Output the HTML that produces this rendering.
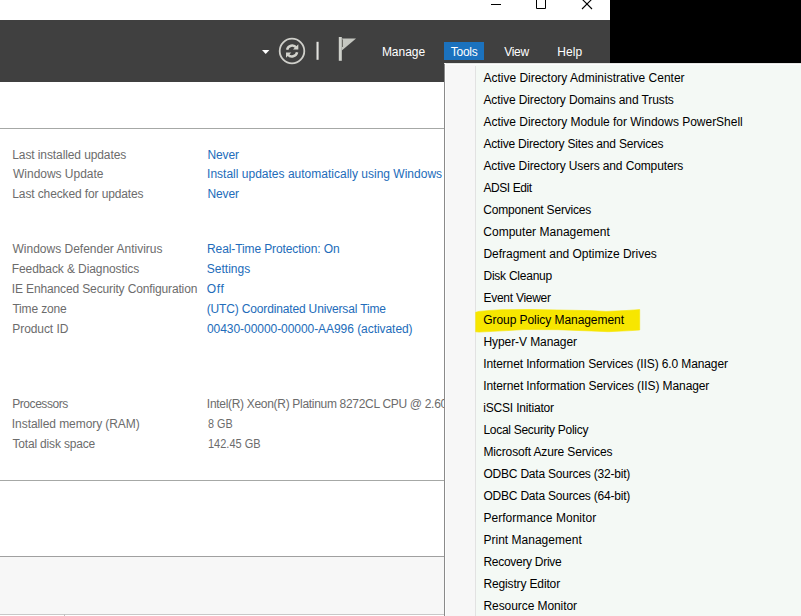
<!DOCTYPE html>
<html><head><meta charset="utf-8"><title>Server Manager</title>
<style>
html,body{margin:0;padding:0;}
body{width:801px;height:616px;overflow:hidden;background:#fff;position:relative;font-family:"Liberation Sans",sans-serif;font-size:12px;}
.abs{position:absolute;}
.t{position:absolute;white-space:nowrap;line-height:14px;height:14px;}
.k{color:#6c6c6c;}
.l{color:#226cba;}
.g{color:#6c6c6c;}
.m{color:#000;}
.h{color:#fff;}
</style></head><body>
<div class="abs" style="left:0;top:0;width:610px;height:616px;background:#fff;overflow:hidden;">
<div class="abs" style="left:0;top:20px;width:610px;height:62px;background:#404040;"></div>
<div class="abs" style="left:0;top:128px;width:610px;height:1px;background:#a6a8a6;"></div>
<div class="abs" style="left:0;top:480px;width:610px;height:1px;background:#a6a8a6;"></div>
<div class="abs" style="left:0;top:556px;width:610px;height:59px;background:#f7f7f7;"></div>
<div class="abs" style="left:0;top:556px;width:610px;height:1px;background:#a0a0a0;"></div>
<div class="abs" style="left:0;top:614px;width:610px;height:1px;background:#c8c8c8;"></div>
<div class="abs" style="left:64px;top:614px;width:1px;height:2px;background:#c0c0c0;"></div>
<svg class="abs" style="left:480px;top:0" width="130" height="20" viewBox="0 0 130 20">
<path d="M11 4.5H21" stroke="#000" stroke-width="1" fill="none"/>
<path d="M56.5 -1V8.5H65.5V-1" stroke="#000" stroke-width="1" fill="none"/>
<path d="M102 -1L112 9M112 -1L102 9" stroke="#000" stroke-width="1.1" fill="none"/>
</svg>
<svg class="abs" style="left:250px;top:30px" width="120" height="45" viewBox="0 0 120 45">
<path d="M12 20H19.4L15.7 24Z" fill="#fff"/>
<circle cx="42" cy="21" r="12.3" fill="none" stroke="#cfcfca" stroke-width="1.8"/>
<g fill="none" stroke="#d2d2cc" stroke-width="2.5">
<path d="M37.1 19.8A5.2 5.2 0 0 1 46.3 17.6"/>
<path d="M47.1 22.2A5.2 5.2 0 0 1 37.9 24.4"/>
</g>
<path d="M48.3 14.2V19.6H43Z" fill="#d2d2cc"/>
<path d="M36 27.8V22.4H41.3Z" fill="#d2d2cc"/>
<rect x="66.5" y="11.8" width="2.1" height="18" fill="#e2e2de"/>
<rect x="88.8" y="7" width="3" height="23.8" fill="#cfd1cb"/>
<path d="M91.8 8.4H106L91.8 20.4Z" fill="#c5c7c1"/>
<rect x="92" y="9.4" width="0.8" height="7.6" fill="#55564f"/>
</svg>
<div class="abs" style="left:444px;top:42px;width:40px;height:18px;background:#1b72be;"></div>
</div>
<div class="abs" style="left:610px;top:0;width:191px;height:63px;background:#000;"></div>
<div class="abs" style="left:444px;top:63px;width:357px;height:553px;background:#f4f9f5;overflow:hidden;">
<div class="abs" style="left:0;top:0;width:1px;height:553px;background:#8a8a8a;"></div>
<div class="abs" style="left:1px;top:0;width:356px;height:2px;background:#fdfdfd;"></div>
<div class="abs" style="left:0;top:0;width:357px;height:1px;background:#e4e6e4;"></div>
<div class="abs" style="left:1px;top:0;width:1px;height:553px;background:#fdfdfd;"></div>
<div class="abs" style="left:2px;top:2px;width:29px;height:551px;background:#f7f7f7;"></div>
<div class="abs" style="left:31px;top:3px;width:1px;height:550px;background:#e2e2e2;"></div>
</div>
<svg class="abs" style="left:470px;top:300px" width="180" height="40" viewBox="470 300 180 40">
<path d="M475.7 312.3L479 311.4L490 310.4L501.7 309.7L530 309.5L558 310L589.5 310.6L606 311.4L625 310.6L635 309.9L639.7 309.6L639.7 330L631 330.6L608.6 331.7L591.7 331L558 329.7L524 329.5L507 330.6L479 332.1L475.7 331.8Z" fill="#f7e600" stroke="#f7e600" stroke-width="0.6" stroke-linejoin="round"/>
</svg>
<div class="t k" style="left:12.31px;top:148px;letter-spacing:-0.102px;">Last installed updates</div>
<div class="t l" style="left:207.40px;top:148px;letter-spacing:-0.096px;width:236.60px;overflow:hidden;">Never</div>
<div class="t k" style="left:13.05px;top:167px;letter-spacing:-0.026px;">Windows Update</div>
<div class="t l" style="left:207.08px;top:167px;letter-spacing:0.005px;width:236.92px;overflow:hidden;">Install updates automatically using Windows Update</div>
<div class="t k" style="left:12.31px;top:187px;letter-spacing:-0.120px;">Last checked for updates</div>
<div class="t l" style="left:207.40px;top:187px;letter-spacing:-0.096px;width:236.60px;overflow:hidden;">Never</div>
<div class="t k" style="left:12.56px;top:242px;letter-spacing:-0.005px;">Windows Defender Antivirus</div>
<div class="t l" style="left:207.00px;top:242px;letter-spacing:-0.103px;width:237.00px;overflow:hidden;">Real-Time Protection: On</div>
<div class="t k" style="left:11.77px;top:262px;letter-spacing:-0.096px;">Feedback &amp; Diagnostics</div>
<div class="t l" style="left:206.74px;top:262px;letter-spacing:0.018px;width:237.26px;overflow:hidden;">Settings</div>
<div class="t k" style="left:11.86px;top:282px;letter-spacing:-0.140px;">IE Enhanced Security Configuration</div>
<div class="t l" style="left:206.87px;top:282px;letter-spacing:0.563px;width:237.13px;overflow:hidden;">Off</div>
<div class="t k" style="left:12.40px;top:302px;letter-spacing:-0.161px;">Time zone</div>
<div class="t l" style="left:206.70px;top:302px;letter-spacing:-0.154px;width:237.30px;overflow:hidden;">(UTC) Coordinated Universal Time</div>
<div class="t k" style="left:12.31px;top:322px;letter-spacing:-0.076px;">Product ID</div>
<div class="t l" style="left:207.01px;top:322px;letter-spacing:-0.055px;width:236.99px;overflow:hidden;">00430-00000-00000-AA996 (activated)</div>
<div class="t k" style="left:12.31px;top:397px;letter-spacing:-0.461px;">Processors</div>
<div class="t g" style="left:206.87px;top:397px;letter-spacing:-0.306px;width:237.13px;overflow:hidden;">Intel(R) Xeon(R) Platinum 8272CL CPU @ 2.60GHz</div>
<div class="t k" style="left:11.86px;top:417px;letter-spacing:-0.071px;">Installed memory (RAM)</div>
<div class="t g" style="left:207.50px;top:417px;transform:scaleX(0.8990);transform-origin:0 0;">8 GB</div>
<div class="t k" style="left:12.40px;top:437px;letter-spacing:-0.169px;">Total disk space</div>
<div class="t g" style="left:208.00px;top:437px;transform:scaleX(0.9158);transform-origin:0 0;">142.45 GB</div>
<div class="t m" style="left:483.45px;top:71px;letter-spacing:-0.007px;">Active Directory Administrative Center</div>
<div class="t m" style="left:483.45px;top:93px;letter-spacing:-0.107px;">Active Directory Domains and Trusts</div>
<div class="t m" style="left:483.45px;top:115px;letter-spacing:-0.018px;">Active Directory Module for Windows PowerShell</div>
<div class="t m" style="left:483.45px;top:137px;letter-spacing:-0.194px;">Active Directory Sites and Services</div>
<div class="t m" style="left:483.45px;top:159px;letter-spacing:-0.118px;">Active Directory Users and Computers</div>
<div class="t m" style="left:483.45px;top:181px;letter-spacing:-0.415px;">ADSI Edit</div>
<div class="t m" style="left:483.25px;top:203px;letter-spacing:-0.200px;">Component Services</div>
<div class="t m" style="left:483.25px;top:225px;letter-spacing:0.025px;">Computer Management</div>
<div class="t m" style="left:483.48px;top:247px;letter-spacing:-0.023px;">Defragment and Optimize Drives</div>
<div class="t m" style="left:483.48px;top:269px;letter-spacing:-0.241px;">Disk Cleanup</div>
<div class="t m" style="left:483.48px;top:291px;letter-spacing:-0.267px;">Event Viewer</div>
<div class="t m" style="left:483.22px;top:313px;letter-spacing:-0.060px;">Group Policy Management</div>
<div class="t m" style="left:483.48px;top:335px;letter-spacing:-0.080px;">Hyper-V Manager</div>
<div class="t m" style="left:483.18px;top:357px;letter-spacing:-0.116px;">Internet Information Services (IIS) 6.0 Manager</div>
<div class="t m" style="left:483.18px;top:379px;letter-spacing:-0.093px;">Internet Information Services (IIS) Manager</div>
<div class="t m" style="left:483.24px;top:401px;letter-spacing:-0.178px;">iSCSI Initiator</div>
<div class="t m" style="left:483.48px;top:423px;letter-spacing:-0.288px;">Local Security Policy</div>
<div class="t m" style="left:483.48px;top:445px;letter-spacing:-0.134px;">Microsoft Azure Services</div>
<div class="t m" style="left:483.43px;top:467px;letter-spacing:-0.205px;">ODBC Data Sources (32-bit)</div>
<div class="t m" style="left:483.43px;top:489px;letter-spacing:-0.205px;">ODBC Data Sources (64-bit)</div>
<div class="t m" style="left:483.48px;top:511px;letter-spacing:0.034px;">Performance Monitor</div>
<div class="t m" style="left:483.48px;top:533px;letter-spacing:0.013px;">Print Management</div>
<div class="t m" style="left:483.48px;top:555px;letter-spacing:-0.292px;">Recovery Drive</div>
<div class="t m" style="left:483.48px;top:577px;letter-spacing:-0.145px;">Registry Editor</div>
<div class="t m" style="left:483.48px;top:599px;letter-spacing:-0.075px;">Resource Monitor</div>
<div class="t h" style="left:381.89px;top:45px;letter-spacing:-0.021px;">Manage</div>
<div class="t h" style="left:450.77px;top:45px;letter-spacing:-0.281px;">Tools</div>
<div class="t h" style="left:504.18px;top:45px;letter-spacing:-0.254px;">View</div>
<div class="t h" style="left:557.15px;top:45px;letter-spacing:0.143px;">Help</div>
</body></html>
